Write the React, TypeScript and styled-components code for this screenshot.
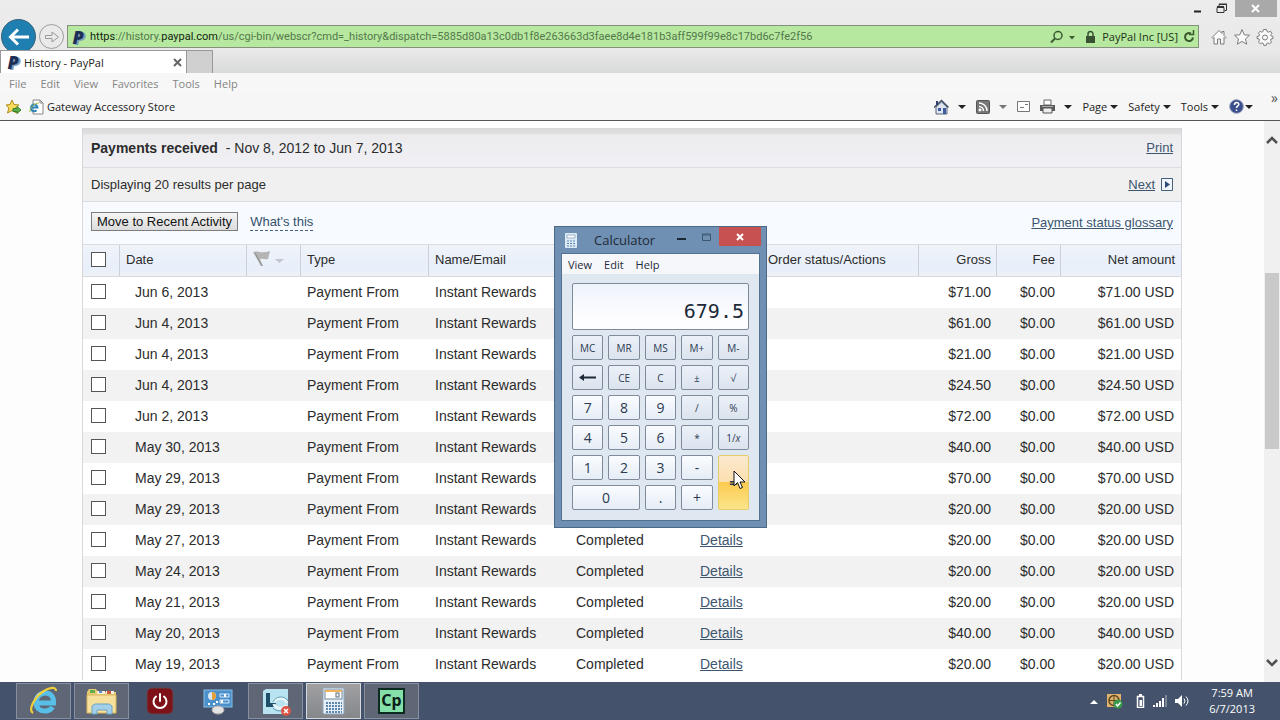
import React from 'react';
import styled, { createGlobalStyle, css } from 'styled-components';

const UI = '"Open Sans", "Noto Sans", sans-serif';
const DOC = '"Liberation Sans", Arial, sans-serif';

const GlobalStyle = createGlobalStyle`
  * { box-sizing: border-box; }
  body { margin: 0; background: #fff; font-family: ${UI}; }
  button, input { font: inherit; margin: 0; }
`;

const Screen = styled.div`
  display: flex;
  flex-direction: column;
  height: 100vh;
  overflow: hidden;
`;

/* Browser frame */
const Chrome = styled.header`
  flex: none;
  background: linear-gradient(#ececec 0, #e9e9e9 50px, #d9dada 73px);
`;

const PlainButton = styled.button`
  display: inline-flex;
  align-items: center;
  justify-content: center;
  padding: 0;
  border: 0;
  background: none;
  color: inherit;
`;

const TitleBar = styled.div`
  display: flex;
  justify-content: flex-end;
  gap: 8px;
  height: 18px;
  padding-right: 3px;
`;

const CloseWindow = styled(PlainButton)`
  width: 42px;
  height: 17px;
  background: #a9a9a9;
`;

const AddressRow = styled.div`
  display: flex;
  align-items: center;
  height: 32px;
  padding: 5px 6px 0 1px;
`;

const BackButton = styled(PlainButton)`
  flex: none;
  width: 35px;
  height: 35px;
  border-radius: 50%;
  background: #1f7fb0;
  border: 1px solid #35627c;
`;

const ForwardButton = styled(PlainButton)`
  flex: none;
  width: 25px;
  height: 25px;
  margin: 0 3px;
  border: 1px solid #9c9c9c;
  border-radius: 50%;
`;

const AddressBar = styled.div`
  display: flex;
  align-items: center;
  flex: 1;
  height: 23px;
  padding: 0 2px;
  gap: 4px;
  border: 1px solid #84917e;
  background: #b6e8a0;
  color: #1c3315;
  font-size: 11px;
`;

const Url = styled.div`
  flex: 1;
  overflow: hidden;
  white-space: nowrap;
  color: #54784a;
  font: 11px/16px Roboto, ${UI};
`;

const Strong = styled.span`
  color: #14240f;
`;

const PayPalMark = styled.span`
  width: 16px;
  color: #1d2f56;
  font: italic 800 18px/18px ${UI};
  text-shadow: 2px 1px 0 #7f9cb8;
  text-align: center;
`;

const BrowserTools = styled.div`
  display: flex;
  gap: 5px;
  padding-left: 11px;
  color: #7c7c7c;
`;

const Tabs = styled.div`
  display: flex;
  height: 23px;
`;

const Tab = styled.div`
  display: flex;
  align-items: center;
  gap: 3px;
  width: 187px;
  padding: 0 4px;
  border: 1px solid #999;
  border-bottom: 0;
  background: #fff;
  color: #222;
`;

const TabTitle = styled.span`
  flex: 1;
  font-size: 11px;
`;

const NewTab = styled.button`
  width: 26px;
  border: 1px solid #999;
  border-width: 1px 1px 0 0;
  background: #d0d0d0;
`;

const MenuBar = styled.nav`
  display: flex;
  align-items: center;
  gap: 14px;
  height: 20px;
  padding-left: 9px;
  background: #f7f7f7;
  color: #858585;
  font-size: 11px;
`;

const FavoritesBar = styled.div`
  display: flex;
  align-items: center;
  height: 28px;
  padding: 0 2px 0 5px;
  border-bottom: 1px solid #555;
  background: #f6f6f6;
  color: #222;
  font-size: 11px;
`;

const FavoriteLink = styled.a`
  display: flex;
  align-items: center;
  gap: 3px;
  flex: 1;
  margin-left: 7px;
  color: inherit;
  text-decoration: none;
`;

const CommandBar = styled.div`
  display: flex;
  align-items: center;
  gap: 10px;
  margin-right: 18px;
`;

const Command = styled(PlainButton)<{ $gap?: number }>`
  gap: ${p => p.$gap ?? 3}px;
`;

const Caret = styled.span<{ $muted?: boolean }>`
  border: 4px solid transparent;
  border-top-color: ${p => (p.$muted ? '#777' : '#222')};
  border-bottom: 0;
`;

const Chevrons = styled.span`
  align-self: flex-start;
  color: #555;
  font-size: 14px;
  line-height: 10px;
`;

/* Page content */
const Viewport = styled.main`
  display: flex;
  flex: 1;
  min-height: 0;
  background: #fdfdfd;
`;

const Document = styled.div`
  flex: 1;
  overflow: hidden;
  padding: 7px 82px 0;
  color: #2c2c2c;
  font: 13px/18px ${DOC};
`;

const ScrollTrack = styled.div`
  display: flex;
  flex-direction: column;
  align-items: center;
  justify-content: space-between;
  width: 16px;
  padding: 14px 0;
  background: #f0f0f0;
`;

const ScrollThumb = styled.div`
  width: 14px;
  height: 33%;
  margin-bottom: 81px;
  background: #c9c9c9;
`;

const Panel = styled.section`
  border: 1px solid #d8d8dc;
  border-bottom: 0;
`;

const PanelRow = styled.div<{ $height: number; $bg: string }>`
  display: flex;
  align-items: center;
  justify-content: space-between;
  height: ${p => p.$height}px;
  padding: 0 8px;
  border-bottom: 1px solid #dcdde0;
  background: ${p => p.$bg};
`;

const Heading = styled.h1`
  margin: 0;
  font-size: 14px;
  font-weight: 400;
  b { margin-right: 4px; }
`;

const DocLink = styled.a`
  color: #3d566f;
  text-decoration: underline;
`;

const NextGroup = styled.span`
  display: flex;
  align-items: center;
  gap: 6px;
`;

const MoveGroup = styled.div`
  display: flex;
  align-items: center;
  gap: 12px;
  padding-bottom: 3px;
`;

const MoveButton = styled.button`
  height: 19px;
  padding: 0 5px;
  border: 1px solid #7d7d7d;
  background: linear-gradient(#f5f5f5, #dcdcdc);
  color: #111;
  font-size: 13px;
  line-height: 15px;
`;

const HintLink = styled.a`
  border-bottom: 1px dashed #44607c;
  color: #34506c;
  line-height: 17px;
  text-decoration: none;
`;

const Table = styled.table`
  width: 100%;
  border-collapse: separate;
  border-spacing: 0;
  table-layout: fixed;
`;

const HeadCell = styled.th<{ $right?: boolean; $line?: boolean }>`
  height: 32px;
  padding: 0 5px 2px 6px;
  border-bottom: 1px solid #d6d9de;
  border-right: 1px solid ${p => (p.$line ? '#ccd1d8' : 'transparent')};
  background: linear-gradient(#f0f3f9, #e7effa 70%, #eef1f6);
  font-weight: 400;
  text-align: ${p => (p.$right ? 'right' : 'left')};
  white-space: nowrap;
  &:first-child { padding-left: 8px; }
`;

const Row = styled.tr`
  background: #fff;
  &:nth-child(even) { background: #f2f2f2; }
`;

const Cell = styled.td<{ $right?: boolean; $indent?: boolean }>`
  height: 31px;
  padding: 0 6px 2px ${p => (p.$indent ? 15 : 6)}px;
  font-size: 14px;
  text-align: ${p => (p.$right ? 'right' : 'left')};
  white-space: nowrap;
  &:first-child { padding-left: 8px; }
  &:last-child { padding-right: 7px; }
`;

const Check = styled.input`
  display: block;
  width: 15px;
  height: 15px;
  appearance: none;
  border: 1px solid #555;
  background: #fff;
`;

/* Calculator window */
const CalcWindow = styled.section`
  position: absolute;
  left: 554px;
  top: 226px;
  width: 213px;
  padding: 0 6px 6px;
  border: 1px solid #4d6988;
  background: #6f90b2;
  color: #1e2a38;
`;

const CalcTitle = styled.header`
  display: flex;
  align-items: flex-start;
  height: 26px;
`;

const CalcName = styled.h2`
  flex: 1;
  margin: 3px 0 0 17px;
  font-size: 13px;
  font-weight: 400;
  line-height: 20px;
`;

const CalcIcon = styled.svg`
  margin: 6px 0 0 4px;
`;

const CalcControl = styled(PlainButton)`
  width: 25px;
  height: 20px;
`;

const CalcClose = styled(PlainButton)`
  width: 42px;
  height: 19px;
  margin-right: -1px;
  background: #c75050;
`;

const CalcBody = styled.div`
  border: 1px solid #52708f;
  background: #dfe7f1;
`;

const CalcMenu = styled.nav`
  display: flex;
  align-items: center;
  gap: 12px;
  height: 20px;
  padding-left: 6px;
  background: #f6f7fa;
  font-size: 11px;
`;

const CalcPad = styled.div`
  padding: 9px 10px 10px;
`;

const Display = styled.output`
  display: flex;
  align-items: flex-end;
  justify-content: flex-end;
  height: 47px;
  padding: 0 4px 4px;
  border: 1px solid #7e8a99;
  border-radius: 2px;
  background: linear-gradient(#eef3fb, #fdfdff 75%);
  font: 20px/28px "DejaVu Sans Mono", monospace;
`;

const Keys = styled.div`
  display: grid;
  grid-template-columns: repeat(5, 1fr);
  grid-auto-rows: 25px;
  gap: 5px;
  margin-top: 5px;
`;

type KeyKind = 'fn' | 'digit' | 'equals';

const Key = styled.button<{ $kind: KeyKind; $wide?: boolean }>`
  display: flex;
  align-items: center;
  justify-content: center;
  padding: 0;
  border: 1px solid #7f8b9b;
  border-radius: 2px;
  background: linear-gradient(#ecf1f8, #dbe3ee);
  color: #2b3a50;
  font-size: 10px;
  line-height: 14px;
  ${p => p.$wide && css`grid-column: span 2;`}
  ${p => p.$kind === 'digit' && css`
    background: linear-gradient(#fafcff, #e6edf6);
    font-size: 14px;
  `}
  ${p => p.$kind === 'equals' && css`
    grid-column: 5;
    grid-row: 5 / span 2;
    border-color: #e6cd6a;
    background: linear-gradient(#fce9cf 0, #fbdfae 50%, #fccb50 50%, #fbe58a);
    font-size: 14px;
    font-weight: 700;
  `}
`;

const Pointer = styled.svg`
  position: absolute;
  left: 178px;
  top: 243px;
`;

/* Taskbar */
const Taskbar = styled.footer`
  display: flex;
  flex: none;
  align-items: center;
  height: 38px;
  padding: 0 25px 0 16px;
  background: #44536b;
  color: #fff;
`;

const Apps = styled.div`
  display: flex;
  flex: 1;
  gap: 3px;
`;

const AppButton = styled.button<{ $state?: 'open' | 'active' }>`
  display: flex;
  align-items: center;
  justify-content: center;
  width: 55px;
  height: 36px;
  padding: 0;
  border: 1px solid transparent;
  background: none;
  ${p => p.$state === 'open' && css`
    border-color: #8890a0;
    background: #5f6675;
  `}
  ${p => p.$state === 'active' && css`
    border-color: #d5d8dc;
    background: linear-gradient(#a0a0a2, #85878b);
  `}
`;

const Captivate = styled.span`
  width: 27px;
  height: 26px;
  border: 2px solid #0b2a20;
  background: #84e0a8;
  color: #0b2018;
  font: 700 16px/20px "Noto Sans", sans-serif;
  text-align: center;
`;

const Tray = styled.div`
  display: flex;
  align-items: center;
  gap: 8px;
`;

const Clock = styled.time`
  margin-left: 12px;
  font-size: 11px;
  line-height: 16px;
  text-align: center;
`;

const payments = [
  ['Jun 6, 2013', '71.00'],
  ['Jun 4, 2013', '61.00'],
  ['Jun 4, 2013', '21.00'],
  ['Jun 4, 2013', '24.50'],
  ['Jun 2, 2013', '72.00'],
  ['May 30, 2013', '40.00'],
  ['May 29, 2013', '70.00'],
  ['May 29, 2013', '20.00'],
  ['May 27, 2013', '20.00'],
  ['May 24, 2013', '20.00'],
  ['May 21, 2013', '20.00'],
  ['May 20, 2013', '40.00'],
  ['May 19, 2013', '20.00'],
];

const columnWidths = [37, 127, 54, 128, 141, 124, 68, 157, 78, 64, 120];
const tableWidth = columnWidths.reduce((sum, w) => sum + w, 0);

const keys: { label: React.ReactNode; kind?: KeyKind; wide?: boolean; name?: string }[] = [
  { label: 'MC' }, { label: 'MR' }, { label: 'MS' }, { label: 'M+' }, { label: 'M-' },
  {
    label: (
      <svg width="17" height="9" viewBox="0 0 17 9" fill="none" stroke="#1e2a38" strokeWidth="2">
        <path d="M2 4.500H17" /><path d="M0 4.500L5 1V8z" fill="#1e2a38" stroke="none" />
      </svg>
    ),
    name: 'Backspace',
  },
  { label: 'CE' }, { label: 'C' }, { label: '±' }, { label: '√' },
  { label: '7', kind: 'digit' }, { label: '8', kind: 'digit' }, { label: '9', kind: 'digit' },
  { label: '/' }, { label: '%' },
  { label: '4', kind: 'digit' }, { label: '5', kind: 'digit' }, { label: '6', kind: 'digit' },
  { label: '*' }, { label: <span>1/<i>x</i></span> },
  { label: '1', kind: 'digit' }, { label: '2', kind: 'digit' }, { label: '3', kind: 'digit' },
  { label: '-', kind: 'digit' }, { label: '=', kind: 'equals' },
  { label: '0', kind: 'digit', wide: true }, { label: '.', kind: 'digit' }, { label: '+', kind: 'digit' },
];

const PageIcon = () => (
  <svg width="15" height="16" viewBox="0 0 15 16">
    <path d="M4 1h7l3 3v11H4z" fill="#fff" stroke="#888" />
    <path d="M11 1v3h3" fill="none" stroke="#888" />
    <path d="M2 8.500h6.500a3.300 3.300 0 1 0-1 2.800" fill="none" stroke="#2d86b8" strokeWidth="2" />
    <path d="M1 13C0 10 5 4 10 4" fill="none" stroke="#a7bd4a" />
  </svg>
);

const ExplorerE = () => (
  <svg width="30" height="30" viewBox="0 0 30 30" fill="none">
    <path d="M8 17H24.500C25 10 21 7 16.500 7C11 7 7 11 7 16.500C7 22 11 25 16 25C19.500 25 22 23.500 23.500 21" stroke="#58bfe8" strokeWidth="5" />
    <path d="M6 14C7 9 11 6 16 5.500" stroke="#a9e2f6" strokeWidth="1.500" />
    <path d="M4 27C-1 24 5 12 14 5.500C20 1.500 27 0 27 5" stroke="#f0cf3c" strokeWidth="2.200" />
  </svg>
);

const FoldersIcon = () => (
  <svg width="32" height="28" viewBox="0 0 32 28">
    <path d="M1 5l2-3h7l2 3h18v21H1z" fill="#e9cb74" />
    <path d="M4 3h5v3H4z" fill="#5fae4c" />
    <path d="M11 4h8v3h-8zM20 4h8v3h-8z" fill="#f4f0e0" />
    <path d="M13 4h3v2h-3z" fill="#5b8fc8" />
    <path d="M21 4h4v3h-4z" fill="#cf5b3a" />
    <path d="M1 8h29v18H1z" fill="#f5e09c" stroke="#d8b75d" />
    <path d="M6 27v-8l3-2h14l3 2v8h-5v-4H11v4z" fill="#a3cfe9" stroke="#6ba3c8" />
  </svg>
);

const PowerIcon = () => (
  <svg width="28" height="28" viewBox="0 0 28 28" fill="none">
    <rect x="1" y="1" width="26" height="26" rx="5" fill="#7d1218" stroke="#5c4a50" />
    <path d="M10 9.500a6.500 6.500 0 1 0 8 0M14 7v7" stroke="#fff" strokeWidth="2" strokeLinecap="round" />
  </svg>
);

const ControlPanelIcon = () => (
  <svg width="30" height="28" viewBox="0 0 30 28">
    <rect x="1" y="3" width="28" height="17" fill="#4b90cb" stroke="#8abfe6" />
    <circle cx="9" cy="9" r="4" fill="#d9e8f4" />
    <path d="M9 9V5a4 4 0 0 1 0 8z" fill="#e5a03c" />
    <path d="M17 7h9v3h-9zM17 13h9v3h-9z" fill="none" stroke="#d4e9f8" />
    <path d="M21 7h2v3h-2zM18 13h2v3h-2z" fill="#fff" />
    <path d="M5 17h2M10 17h2M13 15h2" stroke="#fff" strokeWidth="2" />
    <ellipse cx="15" cy="23" rx="6" ry="4" fill="#e3e3e3" stroke="#aaa" />
  </svg>
);

const LyncIcon = () => (
  <svg width="32" height="31" viewBox="0 0 32 31" fill="none">
    <path d="M3 5l3-2h22v18l-5 7H3z" fill="#b9e3f0" />
    <path d="M6 7h4v10h6v4H6z" fill="#1d4f68" />
    <path d="M14 16c2-5 11-5 13 1M26 19c-2 5-11 4-12-1" stroke="#e9f6fa" strokeWidth="3" />
    <path d="M13 16c2-6 12-7 15-1M27 21c-3 5-11 5-14 1" stroke="#5f9db4" />
    <circle cx="26" cy="25" r="5" fill="#dc5544" />
    <path d="M24 23l4 4M28 23l-4 4" stroke="#fff" strokeWidth="1.500" />
  </svg>
);

const CalculatorApp = () => (
  <svg width="24" height="28" viewBox="0 0 24 28">
    <rect x="1" y="1" width="21" height="26" rx="1" fill="#e6eef6" stroke="#8fa5ba" />
    <rect x="3" y="3" width="17" height="9" fill="#fff" stroke="#71879c" />
    <path d="M3 3h17v2H3z" fill="#eeb35c" />
    <rect x="14" y="6" width="3" height="4" fill="none" stroke="#53687e" />
    <path d="M4 16h16M4 19h16M4 22h16M4 25h16" stroke="#5d86af" strokeWidth="2" strokeDasharray="2 1" />
  </svg>
);

export default function App() {
  return (
    <Screen>
      <GlobalStyle />
      <Chrome>
        <TitleBar>
          <PlainButton aria-label="Minimize">
            <svg width="19" height="18" viewBox="0 0 19 18"><path d="M5 11.500h7" stroke="#222" strokeWidth="2" /></svg>
          </PlainButton>
          <PlainButton aria-label="Restore">
            <svg width="11" height="18" viewBox="0 0 11 18" fill="none" stroke="#333">
              <path d="M3 6.500V4.500H10.500V10.500H8.500" /><path d="M1 7.500H8V12.500H1z" /><path d="M1 6.500H8M3 4H11" />
            </svg>
          </PlainButton>
          <CloseWindow aria-label="Close window">
            <svg width="10" height="10" viewBox="0 0 10 10" stroke="#fff" strokeWidth="2"><path d="M1 1l7 7M8 1L1 8" /></svg>
          </CloseWindow>
        </TitleBar>
        <AddressRow>
          <BackButton aria-label="Back">
            <svg width="22" height="18" viewBox="0 0 22 18" fill="none" stroke="#fff" strokeWidth="3">
              <path d="M2 9H21M10 1.500L2.500 9L10 16.500" />
            </svg>
          </BackButton>
          <ForwardButton aria-label="Forward">
            <svg width="16" height="14" viewBox="0 0 16 14" fill="none" stroke="#999">
              <path d="M1.500 5.500H8V2L14.500 7L8 12V8.500H1.500z" />
            </svg>
          </ForwardButton>
          <AddressBar>
            <PayPalMark>P</PayPalMark>
            <Url>
              <Strong>https</Strong>://history.<Strong>paypal.com</Strong>
              /us/cgi-bin/webscr?cmd=_history&amp;dispatch=5885d80a13c0db1f8e263663d3faee8d4e181b3aff599f99e8c17bd6c7fe2f56
            </Url>
            <PlainButton aria-label="Search">
              <svg width="26" height="14" viewBox="0 0 26 14" fill="none" stroke="#3b5a30">
                <circle cx="8" cy="5.500" r="4" strokeWidth="1.500" /><path d="M5 8.500L1 12.500" strokeWidth="2" />
                <path d="M19 6h6l-3 3.500z" fill="#3b5a30" stroke="none" />
              </svg>
            </PlainButton>
            <svg width="18" height="14" viewBox="0 0 18 14" fill="none">
              <path d="M6 6h9v7H6z" fill="#3a5234" /><path d="M8 6V4a2.500 2.500 0 0 1 5 0V6" stroke="#3a5234" strokeWidth="1.500" />
            </svg>
            PayPal Inc [US]
            <PlainButton aria-label="Refresh">
              <svg width="14" height="14" viewBox="0 0 14 14" fill="none" stroke="#3b5a30" strokeWidth="2">
                <path d="M11 7.500a4 4 0 1 1-2-4" /><path d="M7 4.500h4.500V0" strokeWidth="1.500" />
              </svg>
            </PlainButton>
          </AddressBar>
          <BrowserTools>
            <PlainButton aria-label="Home">
              <svg width="18" height="18" viewBox="0 0 18 18" fill="#fafafa" stroke="currentColor">
                <path d="M2 9.500L9 2.500l3 3V3.500h2v4l2 2-1 1-1-1V16h-3.500v-5h-3v5H4V9.500l-1 1z" />
              </svg>
            </PlainButton>
            <PlainButton aria-label="Favorites">
              <svg width="18" height="18" viewBox="0 0 18 18" fill="#fafafa" stroke="currentColor">
                <path d="M9 1.500l2.200 5.300 5.300.4-4 3.700 1.200 5.300L9 13.400l-4.700 2.800 1.200-5.300-4-3.700 5.300-.4z" />
              </svg>
            </PlainButton>
            <PlainButton aria-label="Settings">
              <svg width="18" height="18" viewBox="0 0 18 18" fill="#fafafa" stroke="currentColor">
                <path d="M7.500 1.500h3l.5 2 1.500.7 2-1 1.500 2-1.200 1.500.4 1.300 1.800.5v2l-2 .5-.5 1.300 1 1.700-1.800 1.800-1.700-1-1.300.6-.5 2h-2.400l-.5-2-1.300-.6-1.800 1L2.500 14l1-1.700-.5-1.300-2-.5v-2l2-.5.5-1.300-1-1.700L4.200 3.200l1.600 1L7 3.500z" />
                <circle cx="9" cy="9.500" r="2.500" />
              </svg>
            </PlainButton>
          </BrowserTools>
        </AddressRow>
        <Tabs>
          <Tab>
            <PayPalMark>P</PayPalMark>
            <TabTitle>History - PayPal</TabTitle>
            <PlainButton aria-label="Close tab">
              <svg width="9" height="9" viewBox="0 0 9 9" stroke="#666" strokeWidth="2"><path d="M1 1l7 7M8 1L1 8" /></svg>
            </PlainButton>
          </Tab>
          <NewTab aria-label="New tab" />
        </Tabs>
        <MenuBar>
          {['File', 'Edit', 'View', 'Favorites', 'Tools', 'Help'].map(m => <PlainButton key={m}>{m}</PlainButton>)}
        </MenuBar>
        <FavoritesBar>
          <PlainButton aria-label="Add to favorites">
            <svg width="17" height="16" viewBox="0 0 17 16">
              <path d="M7 1l2 4.500 5 .5-3.800 3 1.300 5L7 11.500 2.500 14l1.300-5L1 6l4-.5z" fill="#f9dc5c" stroke="#b08e22" />
              <path d="M8 9.500h4V7.500l4 3.500-4 3.500v-2H8z" fill="#5cae4a" stroke="#39802c" />
            </svg>
          </PlainButton>
          <FavoriteLink href="#"><PageIcon />Gateway Accessory Store</FavoriteLink>
          <CommandBar>
            <Command $gap={9} aria-label="Home page">
              <svg width="15" height="16" viewBox="0 0 15 16">
                <path d="M2 8v7h11V8L7.500 3z" fill="#dfe5f0" stroke="#5b6577" /><path d="M0 8.500L7.500 1.500l7 7" fill="none" stroke="#45506a" strokeWidth="1.500" />
                <path d="M2 2h2v4H2z" fill="#333f70" /><path d="M4 9h3v3H4zM9 9h3v6H9z" fill="#3f5ba0" />
              </svg>
              <Caret />
            </Command>
            <Command $gap={9} aria-label="Feeds">
              <svg width="14" height="14" viewBox="0 0 14 14" fill="none" stroke="#fff" strokeWidth="1.500">
                <rect x="0.500" y="0.500" width="13" height="13" rx="1" fill="#777" stroke="#555" strokeWidth="1" />
                <path d="M3 3a8 8 0 0 1 8 8M3 6.500a4.500 4.500 0 0 1 4.500 4.500" /><circle cx="4" cy="10" r="0.700" />
              </svg>
              <Caret $muted />
            </Command>
            <Command aria-label="Read mail">
              <svg width="13" height="11" viewBox="0 0 13 11" fill="#fff" stroke="#777">
                <path d="M0.500 0.500h12v10H.5z" /><path d="M8 3.500h3M3 6.500h4" />
              </svg>
            </Command>
            <Command $gap={9} aria-label="Print page">
              <svg width="15" height="15" viewBox="0 0 15 15">
                <path d="M4 1h7v5H4z" fill="#fff" stroke="#666" /><path d="M0 6h15v6H0z" fill="#5a5a5a" />
                <path d="M3 9h9v5H3z" fill="#eee" stroke="#555" /><path d="M2 7.500h11" stroke="#aaa" />
              </svg>
              <Caret />
            </Command>
            <Command>Page<Caret /></Command>
            <Command>Safety<Caret /></Command>
            <Command>Tools<Caret /></Command>
            <Command $gap={1} aria-label="Help">
              <svg width="15" height="15" viewBox="0 0 15 15" fill="none">
                <circle cx="7.500" cy="7.500" r="6.800" fill="#3b4f8c" stroke="#8d97b4" />
                <path d="M5.500 6c0-3.500 4.500-3 4.300-.5C9.700 7 7.500 7 7.500 9M7.500 10.500v1.500" stroke="#fff" strokeWidth="1.500" />
              </svg>
              <Caret />
            </Command>
          </CommandBar>
          <Chevrons>»</Chevrons>
        </FavoritesBar>
      </Chrome>

      <Viewport>
        <Document>
          <Panel>
            <PanelRow $height={39} $bg="linear-gradient(#d9d9da 0, #e2e2e3 5px, #ececef 6px, #f1f1f5)">
              <Heading><b>Payments received</b> - Nov 8, 2012 to Jun 7, 2013</Heading>
              <DocLink href="#">Print</DocLink>
            </PanelRow>
            <PanelRow $height={34} $bg="#f0f0f0">
              <span>Displaying 20 results per page</span>
              <NextGroup>
                <DocLink href="#">Next</DocLink>
                <svg width="12" height="13" viewBox="0 0 12 13">
                  <path d="M0.500 0.500h11v12H.5z" fill="#f2f6fc" stroke="#44607c" /><path d="M4 3l5 3.500L4 10z" fill="#2f4c78" />
                </svg>
              </NextGroup>
            </PanelRow>
            <PanelRow $height={43} $bg="#f7fbff">
              <MoveGroup>
                <MoveButton>Move to Recent Activity</MoveButton>
                <HintLink href="#">What's this</HintLink>
              </MoveGroup>
              <DocLink href="#">Payment status glossary</DocLink>
            </PanelRow>
            <Table>
              <colgroup>
                {columnWidths.map((w, i) => <col key={i} style={{ width: `${(w / tableWidth) * 100}%` }} />)}
              </colgroup>
              <thead>
                <tr>
                  <HeadCell $line><Check type="checkbox" aria-label="Select all payments" /></HeadCell>
                  <HeadCell $line>Date</HeadCell>
                  <HeadCell $line aria-label="Flag">
                    <svg width="32" height="18" viewBox="0 -2 32 18">
                      <path d="M0 2c5-2 8 2 17-1l-2 8c-3 1-5-1-8 0l3 7H8z" fill="#b5b5b5" />
                      <path d="M2 3l7 13" stroke="#888" /><path d="M22 9h9l-4.500 4z" fill="#c2c6cc" />
                    </svg>
                  </HeadCell>
                  <HeadCell $line>Type</HeadCell>
                  <HeadCell>Name/Email</HeadCell>
                  <HeadCell>Payment status</HeadCell>
                  <HeadCell>Details</HeadCell>
                  <HeadCell $line>Order status/Actions</HeadCell>
                  <HeadCell $line $right>Gross</HeadCell>
                  <HeadCell $line $right>Fee</HeadCell>
                  <HeadCell $right>Net amount</HeadCell>
                </tr>
              </thead>
              <tbody>
                {payments.map(([date, amount], i) => (
                  <Row key={i}>
                    <Cell><Check type="checkbox" aria-label={`Select payment of ${date}`} /></Cell>
                    <Cell $indent>{date}</Cell>
                    <Cell />
                    <Cell>Payment From</Cell>
                    <Cell>Instant Rewards</Cell>
                    <Cell>Completed</Cell>
                    <Cell><DocLink href="#">Details</DocLink></Cell>
                    <Cell />
                    <Cell $right>${amount}</Cell>
                    <Cell $right>$0.00</Cell>
                    <Cell $right>${amount} USD</Cell>
                  </Row>
                ))}
              </tbody>
            </Table>
          </Panel>
        </Document>
        <ScrollTrack>
          <svg width="12" height="10" viewBox="0 0 12 10" fill="none" stroke="#505050" strokeWidth="2.500"><path d="M1 8l5-5 5 5" /></svg>
          <ScrollThumb />
          <svg width="12" height="10" viewBox="0 0 12 10" fill="none" stroke="#505050" strokeWidth="2.500"><path d="M1 2l5 5 5-5" /></svg>
        </ScrollTrack>
      </Viewport>

      <Taskbar>
        <Apps>
          <AppButton $state="open" aria-label="Internet Explorer"><ExplorerE /></AppButton>
          <AppButton $state="open" aria-label="File Explorer"><FoldersIcon /></AppButton>
          <AppButton aria-label="Power"><PowerIcon /></AppButton>
          <AppButton aria-label="Control Panel"><ControlPanelIcon /></AppButton>
          <AppButton $state="open" aria-label="Lync"><LyncIcon /></AppButton>
          <AppButton $state="active" aria-label="Calculator"><CalculatorApp /></AppButton>
          <AppButton $state="open"><Captivate>Cp</Captivate></AppButton>
        </Apps>
        <Tray>
          <svg width="8" height="5" viewBox="0 0 8 5"><path d="M0 5l4-4 4 4z" fill="#fff" /></svg>
          <svg width="17" height="16" viewBox="0 0 17 16" fill="none">
            <path d="M1 1h14v13H1z" fill="#e0b26c" /><circle cx="8" cy="7.500" r="5" stroke="#5f4a22" strokeWidth="1.500" />
            <path d="M3 7.500h10M8 2.500v10" stroke="#5f4a22" /><circle cx="12" cy="11" r="4.500" fill="#379a4a" />
            <path d="M10 11l1.500 2 3-3.500" stroke="#fff" strokeWidth="1.500" />
          </svg>
          <svg width="14" height="14" viewBox="-1 0 14 14" fill="none">
            <path d="M5.500 2.500h6v11h-6z" stroke="#fff" strokeWidth="1.500" /><path d="M7 0h3v2H7zM7.500 6h2.500v6H7.500z" fill="#fff" />
          </svg>
          <svg width="14" height="12" viewBox="0 0 14 12" fill="#fff">
            <path d="M0 10h2v2H0zM3 8h2v4H3zM6 6h2v6H6zM9 3h2v9H9z" /><path d="M12 0h2v12h-2z" fill="#7d8799" />
          </svg>
          <svg width="14" height="14" viewBox="0 0 14 14" fill="none" stroke="#fff">
            <path d="M0 5h3l4-4v12L3 9H0z" fill="#fff" stroke="none" /><path d="M9 4.500q2 2.500 0 5M11 2.500q4 4.500 0 9" />
          </svg>
          <Clock>7:59 AM<br />6/7/2013</Clock>
        </Tray>
      </Taskbar>

      <CalcWindow aria-label="Calculator">
        <CalcTitle>
          <CalcIcon width="12" height="15" viewBox="0 0 12 15">
            <rect width="12" height="15" rx="1" fill="#dceaf6" /><path d="M2 2h8v3H2z" fill="#fff" stroke="#9bb4c8" />
            <path d="M2 8h8M2 10.500h8M2 13h8" stroke="#5c87b0" strokeDasharray="2 1" />
          </CalcIcon>
          <CalcName>Calculator</CalcName>
          <CalcControl aria-label="Minimize calculator">
            <svg width="9" height="16" viewBox="0 0 9 16"><path d="M0 10h9" stroke="#1a2736" strokeWidth="2" /></svg>
          </CalcControl>
          <CalcControl aria-label="Maximize calculator">
            <svg width="9" height="8" viewBox="0 0 9 8" fill="none" stroke="#3e5874"><path d="M.5 1h8v6.500h-8zM.5 2h8" /></svg>
          </CalcControl>
          <CalcClose aria-label="Close calculator">
            <svg width="8" height="8" viewBox="0 0 8 8" stroke="#fff" strokeWidth="2"><path d="M1 1l6 6M7 1L1 7" /></svg>
          </CalcClose>
        </CalcTitle>
        <CalcBody>
          <CalcMenu>
            {['View', 'Edit', 'Help'].map(m => <PlainButton key={m}>{m}</PlainButton>)}
          </CalcMenu>
          <CalcPad>
            <Display>679.5</Display>
            <Keys>
              {keys.map((k, i) => (
                <Key key={i} $kind={k.kind ?? 'fn'} $wide={k.wide} aria-label={k.name}>{k.label}</Key>
              ))}
            </Keys>
          </CalcPad>
        </CalcBody>
        <Pointer width="13" height="20" viewBox="0 0 13 20">
          <path d="M1 1v15l3.500-3.500L7 18.500l2.500-1L7 12h5z" fill="#fff" stroke="#111" />
        </Pointer>
      </CalcWindow>
    </Screen>
  );
}
